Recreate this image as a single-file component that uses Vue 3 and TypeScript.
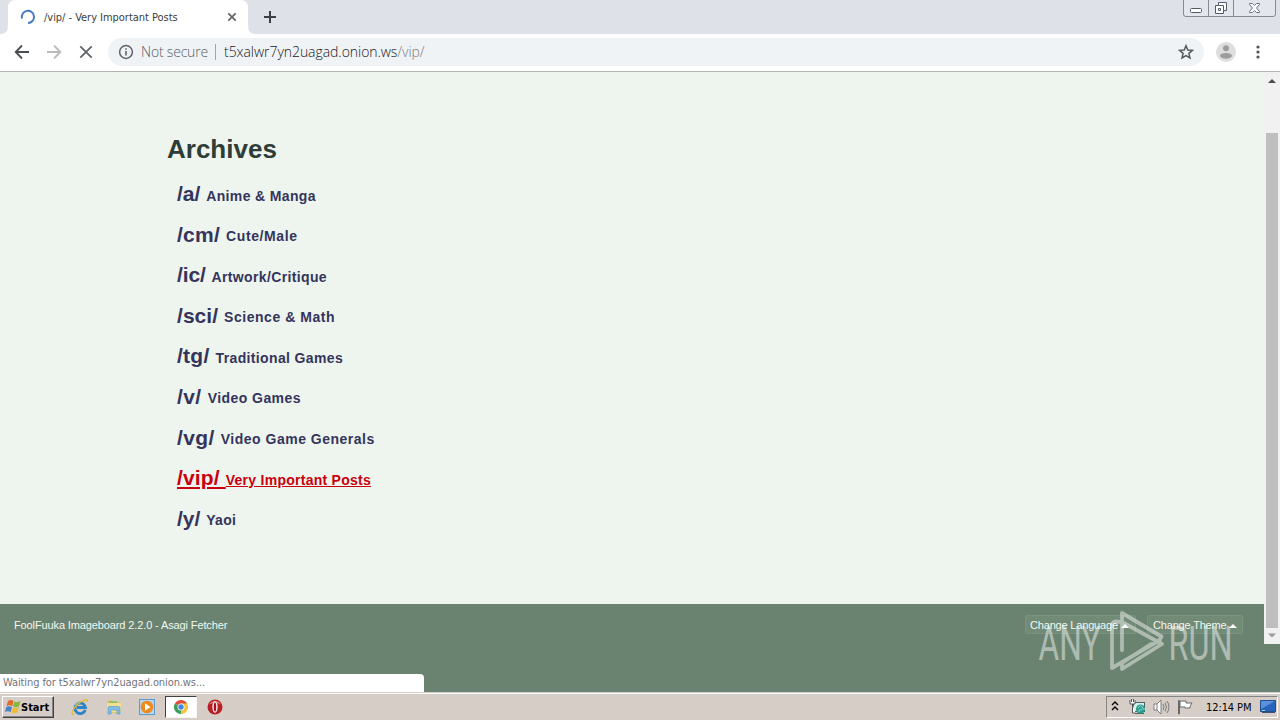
<script setup lang="ts">
interface Board { path: string; name: string; pathSpacing: number; nameSpacing: number; hover?: boolean }

const boards: Board[] = [
  { path: '/a/', name: 'Anime & Manga', pathSpacing: 0, nameSpacing: 0.36 },
  { path: '/cm/', name: 'Cute/Male', pathSpacing: 0.25, nameSpacing: 0.6 },
  { path: '/ic/', name: 'Artwork/Critique', pathSpacing: -0.1, nameSpacing: 0.36 },
  { path: '/sci/', name: 'Science & Math', pathSpacing: 0.05, nameSpacing: 0.54 },
  { path: '/tg/', name: 'Traditional Games', pathSpacing: 0.25, nameSpacing: 0.36 },
  { path: '/v/', name: 'Video Games', pathSpacing: 0.4, nameSpacing: 0.42 },
  { path: '/vg/', name: 'Video Game Generals', pathSpacing: 0.35, nameSpacing: 0.5 },
  { path: '/vip/', name: 'Very Important Posts', pathSpacing: 0.15, nameSpacing: 0.26, hover: true },
  { path: '/y/', name: 'Yaoi', pathSpacing: 0, nameSpacing: 0.3 },
]
</script>

<template>
  <div class="screen">
    <header class="tabstrip">
      <svg class="tab-shape" width="264" height="34" viewBox="0 0 264 34">
        <path d="M0 34Q8 34 8 26V8Q8 0 16 0H240Q248 0 248 8V26Q248 34 256 34Z" fill="#fff" />
      </svg>
      <div class="tab">
        <svg class="spinner" width="16" height="16" viewBox="0 0 16 16" fill="none">
          <path d="M2 9.400A6.100 6.100 0 1 1 8 14" stroke="#4679c8" stroke-width="2" />
        </svg>
        <span class="tab-title">/vip/ - Very Important Posts</span>
        <svg class="tab-close" width="10" height="10" viewBox="0 0 10 10">
          <path d="M1.300 1.300l7.400 7.400M8.700 1.300l-7.400 7.400" stroke="#606367" stroke-width="1.700" />
        </svg>
      </div>
      <svg class="new-tab" width="14" height="14" viewBox="0 0 14 14">
        <path d="M7 1v12M1 7h12" stroke="#3c4043" stroke-width="2" />
      </svg>
      <svg class="window-buttons" width="94" height="18" viewBox="0 0 94 18" fill="none">
        <path d="M.5 0V14Q.5 16.500 3 16.500H90Q92.500 16.500 92.500 14V0" fill="#e3e6ec" stroke="#858b96" />
        <path d="M25.500 0V16M50.500 0V16" stroke="#858b96" />
        <rect x="7.500" y="8.500" width="11" height="4" rx="1" fill="#fff" stroke="#555b66" />
        <path d="M35.500 2.500h8v8h-3v3h-8v-8h3z" fill="#fff" stroke="#555b66" />
        <path d="M35.500 5.500h5v5M35.500 8.500h2v2h-2z" stroke="#555b66" />
        <path d="M66.500 3.500h3l2 2 2-2h3v1l-3 3.500 3 3.500v1h-3l-2-2-2 2h-3v-1l3-3.500-3-3.500z" fill="#fff" stroke="#6b717c" />
      </svg>
    </header>

    <div class="toolbar">
      <svg class="nav-icon" width="16" height="16" viewBox="0 0 16 16" fill="none" stroke="#4a4d51" stroke-width="1.800">
        <path d="M15 8H2M8 1.500L1.700 8L8 14.500" />
      </svg>
      <svg class="nav-icon" width="16" height="16" viewBox="0 0 16 16" fill="none" stroke="#b9bbbd" stroke-width="1.800">
        <path d="M1 8h13M8 1.500L14.300 8L8 14.500" />
      </svg>
      <svg class="nav-icon" width="16" height="16" viewBox="0 0 16 16" fill="none" stroke="#606367" stroke-width="1.800">
        <path d="M2.300 2.300l11.400 11.400M13.700 2.300L2.300 13.700" />
      </svg>
      <div class="omnibox">
        <svg width="16" height="16" viewBox="0 0 16 16" fill="none">
          <circle cx="8" cy="8" r="6.400" stroke="#5f6368" stroke-width="1.500" />
          <path d="M8 7v4.500M8 4.300v1.500" stroke="#5f6368" stroke-width="1.600" />
        </svg>
        <span class="security">Not secure</span>
        <span class="divider"></span>
        <span class="url">t5xalwr7yn2uagad.onion.ws<span class="url-path">/vip/</span></span>
        <svg class="star" width="16" height="16" viewBox="0 0 16 16" fill="none">
          <path d="M8 1.700l1.800 4.250 4.600.4-3.500 3 1.050 4.500L8 11.500l-3.950 2.350 1.050-4.500-3.500-3 4.600-.4z" stroke="#54585d" stroke-width="1.500" />
        </svg>
      </div>
      <svg class="avatar" width="20" height="20" viewBox="0 0 20 20">
        <circle cx="10" cy="10" r="10" fill="#dedede" />
        <circle cx="10" cy="6.300" r="3" fill="#9c9c9c" />
        <ellipse cx="10" cy="13.800" rx="6" ry="2.900" fill="#9c9c9c" />
      </svg>
      <svg class="kebab" width="4" height="14" viewBox="0 0 4 14" fill="#505357">
        <circle cx="2" cy="2" r="1.600" /><circle cx="2" cy="7" r="1.600" /><circle cx="2" cy="12" r="1.600" />
      </svg>
    </div>

    <div class="viewport">
      <main class="page">
        <h1>Archives</h1>
        <ul class="boards">
          <li v-for="board in boards" :key="board.path" :class="{ hover: board.hover }">
            <span class="board-path" :style="{ letterSpacing: board.pathSpacing + 'px' }">{{ board.path }}&nbsp;</span><span class="board-name" :style="{ letterSpacing: board.nameSpacing + 'px' }">{{ board.name }}</span>
          </li>
        </ul>
      </main>
      <footer class="page-footer">
        <span class="version">FoolFuuka Imageboard 2.2.0 - Asagi Fetcher</span>
        <button class="picker language"><span>Change Language</span><i></i></button>
        <button class="picker theme"><span>Change Theme</span><i></i></button>
      </footer>

      <div class="scrollbar">
        <svg width="16" height="17" viewBox="0 0 16 17"><path d="M4 11l4-4 4 4z" fill="#4b4b4b" /></svg>
        <div class="thumb"></div>
        <svg class="down" width="16" height="16" viewBox="0 0 16 16"><path d="M4 5.500h8l-4 4z" fill="#9b9b9b" /></svg>
      </div>
      <div class="status">Waiting for t5xalwr7yn2uagad.onion.ws...</div>
      <svg class="watermark" width="200" height="64" viewBox="0 0 200 64">
        <text x="2.500" y="51.500" textLength="62" lengthAdjust="spacingAndGlyphs">ANY</text>
        <text x="132.500" y="51.500" textLength="64" lengthAdjust="spacingAndGlyphs">RUN</text>
        <path
          d="M86 42V5L125.500 28.500L123 33M84 14Q76 12 76 18V60L124 32M86 14L126 36L86 61V55L115 36"
          fill="none" stroke="#fff" stroke-width="3.800" stroke-linejoin="round" stroke-linecap="round"
        />
      </svg>
    </div>

    <div class="taskbar">
      <button class="start">
        <svg width="16" height="16" viewBox="0 0 16 16">
          <path d="M3 2Q6 0 8.500 2L7.300 7Q4.500 5.500 1.500 7z" fill="#e56830" />
          <path d="M9.300 2.500Q12 4 15.500 2L14 7.500Q11 9 8 7.300z" fill="#83b93c" />
          <path d="M1.300 8Q4 6.500 7 8L5.700 13Q3 11.500 0 13z" fill="#4783cb" />
          <path d="M7.800 8.500Q11 10 13.800 8.500L12.500 13.500Q9 15.200 6.500 13.400z" fill="#edbd32" />
        </svg>
        <span>Start</span>
      </button>
      <div class="quick">
        <svg width="18" height="18" viewBox="0 0 18 18" fill="none">
          <path d="M14.300 12A5.300 5.300 0 1 1 14.500 9.500H6" stroke="#2b83c8" stroke-width="2.800" />
          <path d="M4 7Q6 4 10 4.500" stroke="#73c5f1" />
          <path d="M3 16Q-1 17 3 10.500Q8 3.500 14 2Q17 1 16 4" stroke="#e4b82c" stroke-width="1.300" />
        </svg>
      </div>
      <div class="quick">
        <svg width="18" height="18" viewBox="0 0 18 18">
          <path d="M2 4V2.500h5L8.500 4H15v11H2z" fill="#e5c565" />
          <path d="M4 3h8v3H4z" fill="#96bf69" /><path d="M2 5h14v9H2z" fill="#f2df93" />
          <path d="M3 16V10Q3 8.500 4.500 8.500h9Q15 8.500 15 10v6h-3v-4H6v4z" fill="#82bce2" stroke="#5a9fcb" stroke-width=".7" />
        </svg>
      </div>
      <div class="quick">
        <svg width="18" height="18" viewBox="0 0 18 18">
          <rect x="1.500" y="1.500" width="15" height="15" fill="#b5d6f0" stroke="#5c9bd1" />
          <circle cx="9" cy="9" r="6.300" fill="#ef8a1d" /><path d="M7 5.200L12.500 9 7 12.800z" fill="#fff" />
        </svg>
      </div>
      <div class="quick active">
        <svg width="16" height="16" viewBox="0 0 16 16">
          <path d="M8 8L1.900 4.500A7 7 0 0 1 14.100 4.500z" fill="#df4b3d" />
          <path d="M8 8L1.900 4.500A7 7 0 0 0 8 15z" fill="#3b9d58" />
          <path d="M8 8V15A7 7 0 0 0 14.100 4.500H8z" fill="#f2c53a" />
          <circle cx="8" cy="8" r="3.500" fill="#fff" /><circle cx="8" cy="8" r="2.700" fill="#4684e2" />
        </svg>
      </div>
      <div class="quick">
        <svg width="18" height="18" viewBox="0 0 18 18">
          <circle cx="9" cy="9" r="7.500" fill="#b71e25" />
          <path d="M3 6.500Q9-1 15 6.500Q9 4 3 6.500z" fill="#e37874" />
          <ellipse cx="9" cy="9" rx="2.700" ry="5.700" fill="#f6eaea" /><ellipse cx="9" cy="9" rx="1.200" ry="4.500" fill="#a3121b" />
        </svg>
      </div>
      <div class="tray">
        <svg width="8" height="12" viewBox="0 0 8 12" fill="none" stroke="#000" stroke-width="1.400"><path d="M1 4l3-3 3 3M1 9l3-3 3 3" /></svg>
        <svg class="network" width="18" height="16" viewBox="0 0 18 16">
          <rect x="4.500" y="3.500" width="11" height="9" fill="#d8eeeb" stroke="#4a6464" />
          <path d="M6 14.500h9" stroke="#556363" /><circle cx="11.500" cy="10" r="4.500" fill="#279d91" />
          <path d="M9 9q3-4 4-1t3 2M10 13q0-4 3-2" stroke="#a1ddcb" fill="none" />
          <path d="M1 1v4h5V1M2.500 0v3M4.500 0v3M3.500 5v9h3" fill="#fff" stroke="#52595b" />
        </svg>
        <svg class="sound" width="17" height="16" viewBox="0 0 17 16" fill="none" stroke="#7b7b7b">
          <path d="M1 5h3l4-4v14l-4-4H1z" fill="#fff" /><path d="M4 5v6M10 5q2 3 0 6M12 3.500q3 4.500 0 9M14 2q4 6 0 12" />
        </svg>
        <svg class="flag" width="16" height="16" viewBox="0 0 16 16"><path d="M1.500 15V1.500h1V15zM3 2h6v2h6q-2 2-2 5H8V8H3z" fill="#fff" stroke="#686868" /></svg>
        <span class="clock">12:14 PM</span>
        <svg class="desktop" width="16" height="14" viewBox="0 0 16 14">
          <path d="M.5.5h15v11H.5z" fill="#2565bd" stroke="#214f8d" /><path d="M1 1h14L1 9z" fill="#5a91dc" /><path d="M2 12.500h13" stroke="#3a5377" /><path d="M2 10.500h3" stroke="#9fd1f2" />
        </svg>
      </div>
    </div>
  </div>
</template>

<style>
html, body { margin: 0; overflow: hidden; }
</style>

<style scoped>
* { box-sizing: border-box; }
.screen { width: 1280px; height: 720px; display: flex; flex-direction: column; overflow: hidden; font-family: "DejaVu Sans Condensed", "DejaVu Sans", sans-serif; font-size: 11px; white-space: nowrap; }
svg { display: block; flex: none; }
button { padding: 0; font-family: inherit; color: #000; }
.tabstrip { height: 34px; flex: none; background: #dee1e8; display: flex; position: relative; }
.tab-shape { position: absolute; left: 0; top: 0; }
.tab { width: 248px; height: 34px; padding-left: 20px; display: flex; align-items: center; position: relative; }
.tab-title { margin-left: 8px; width: 176px; color: #3b3d40; letter-spacing: -.03px; }
.tab-close { margin-left: 7px; }
.new-tab { margin: 10px 0 0 15px; }
.window-buttons { margin-left: auto; margin-right: 3px; }
.toolbar { height: 38px; flex: none; display: flex; align-items: center; padding: 0 20px 2px 14px; background: #fff; border-bottom: 1px solid #b3b5b3; }
.nav-icon { margin-right: 16px; }
.omnibox { width: 1096px; height: 28px; margin-left: -2px; padding: 0 10px; border-radius: 14px; background: #f0f3f6; display: flex; align-items: center; font-family: "Open Sans", sans-serif; font-weight: 300; font-size: 14px; }
.security { margin-left: 7px; width: 67px; color: #5a5e65; letter-spacing: -.2px; }
.divider { width: 1px; height: 16px; margin: 0 8px 0 7px; background: #a2a5aa; }
.url { color: #17191d; letter-spacing: -.05px; }
.url-path { color: #777b80; }
.star { margin-left: auto; }
.avatar { margin-left: 12px; }
.kebab { margin-left: auto; }
.viewport { height: 620px; flex: none; position: relative; background: #eef5ee; }
.page { height: 532px; padding: 62px 0 0 167px; font-family: "Liberation Sans", sans-serif; }
h1 { margin: 0 0 10px; font-size: 26px; line-height: 30px; color: #2f3d38; }
.boards { list-style: none; margin: 0; padding: 0 0 0 10px; }
.boards li { height: 40.6px; line-height: 40.6px; font-weight: bold; color: #34345c; }
.boards li.hover { color: #c9000d; }
.hover span { text-decoration: underline; }
.board-path { font-size: 21px; }
.board-name { font-size: 14px; position: relative; top: -.5px; }
.page-footer { height: 88px; background: #6a8370; display: flex; padding: 11px 37px 0 14px; color: #f2f7f2; font-family: "Liberation Sans", sans-serif; }
.version { margin-top: 4px; letter-spacing: -.12px; }
.picker { height: 19px; border: 1px solid #7b927f; border-radius: 2px; background: #718b77; color: #f2f7f2; font-family: "Liberation Sans", sans-serif; font-size: 11px; letter-spacing: -.18px; display: flex; align-items: center; padding-left: 5px; }
.language { width: 111px; padding-left: 4px; margin-left: auto; }
.theme { width: 96px; margin-left: 11px; }
.picker i { border: 4px solid transparent; border-top: 0; border-bottom-color: #fff; margin-left: 3px; margin-top: 2px; }
.scrollbar { position: absolute; right: 0; top: 0; width: 16px; height: 572px; background: #f1f1f1; }
.thumb { height: 495px; margin: 44px 2px 0; background: #bfbfbf; }
.status { position: absolute; left: 0; bottom: 0; width: 424px; height: 18px; background: #fff; border-radius: 0 4px 0 0; padding-left: 3px; line-height: 18px; color: #717479; letter-spacing: -.1px; }
.watermark { position: absolute; left: 1036px; top: 536px; overflow: visible; opacity: .45; fill: #fff; font-family: Roboto, sans-serif; font-weight: 400; font-size: 48px; }
.taskbar { height: 28px; flex: none; background: #d6cec6; box-shadow: inset 0 1px #d6cec6, inset 0 2px #fff; display: flex; align-items: center; padding: 4px 2px 2px; }
.start { width: 52px; height: 22px; padding-left: 2px; display: flex; align-items: center; background: #d6cec6; border: 1px solid; border-color: #fff #404040 #404040 #fff; box-shadow: inset -1px -1px #858585; font-weight: bold; font-size: 11px; margin-right: 10px; }
.quick { width: 32px; height: 22px; margin-right: 1.700px; display: flex; align-items: center; justify-content: center; }
.quick.active { background: #fff; border: 1px solid; border-color: #404040 #f7f7f7 #f7f7f7 #404040; }
.tray { margin-left: auto; width: 172px; height: 22px; border: 1px solid; border-color: #858585 #fff #fff #858585; display: flex; align-items: center; padding-left: 4px; }
.network { margin-left: 10px; }
.sound { margin-left: 6px; }
.flag { margin-left: 7px; }
.clock { margin-left: 13px; width: 46px; color: #000; letter-spacing: -.1px; }
.desktop { margin-left: 8px; }
</style>
